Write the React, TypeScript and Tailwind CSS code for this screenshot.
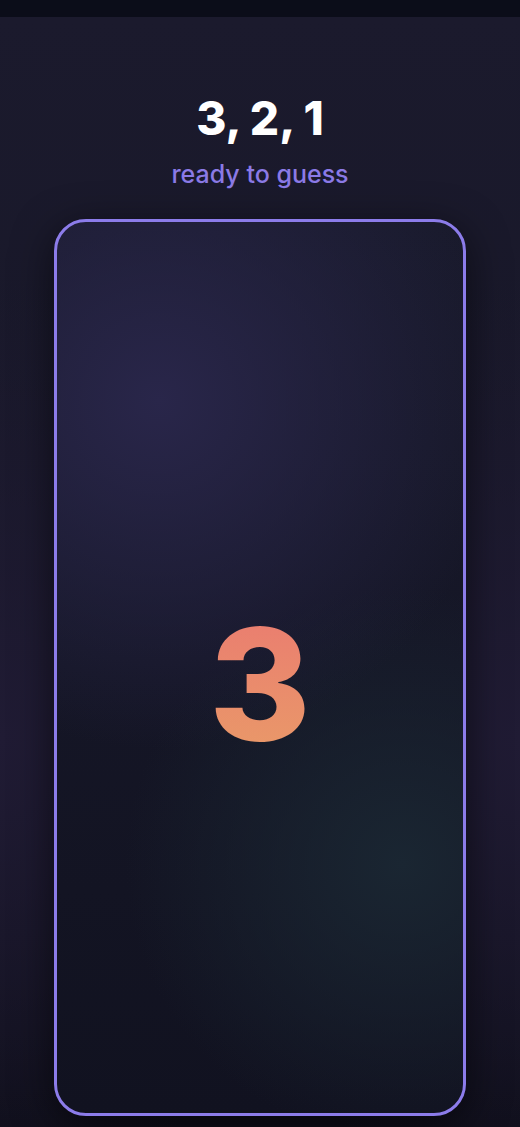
import React from 'react';

const App: React.FC = () => {
  return (
    <div
      className="h-[1127px] w-full overflow-hidden flex flex-col bg-[#161626]"
      style={{ fontFamily: 'Inter, "Noto Sans", sans-serif' }}
    >
      <div className="h-[17px] bg-[#0b0d19] flex-shrink-0" />
      <div className="flex-1 flex flex-col items-center bg-[radial-gradient(ellipse_at_0%_65%,#201b34_0%,transparent_45%),radial-gradient(ellipse_at_100%_65%,#201b34_0%,transparent_45%),linear-gradient(to_bottom,#1b1a2d_0%,#171727_60%,#0e0e19_100%)]">
        <h1 className="mt-[74px] text-[46px] leading-[54px] font-extrabold text-white">3, 2, 1</h1>
        <p className="mt-[13px] text-[25px] leading-[32px] text-[#8b7ae6] font-medium">ready to guess</p>
        <div className="mt-[29px] w-[412px] h-[897px] rounded-[32px] border-[3px] border-[#8c7cea] shadow-[0_10px_40px_rgba(0,0,0,0.55)] overflow-hidden bg-[radial-gradient(circle_at_25%_20%,#29264a_0%,transparent_45%),radial-gradient(circle_at_85%_72%,#1a2632_0%,transparent_38%),linear-gradient(to_bottom,#191a2c,#111220)] flex items-center justify-center">
          <span className="text-[155px] leading-none font-extrabold bg-gradient-to-b from-[#ea7b70] to-[#e99a68] bg-clip-text text-transparent mt-[32px]">
            3
          </span>
        </div>
      </div>
    </div>
  );
};

export default App;
